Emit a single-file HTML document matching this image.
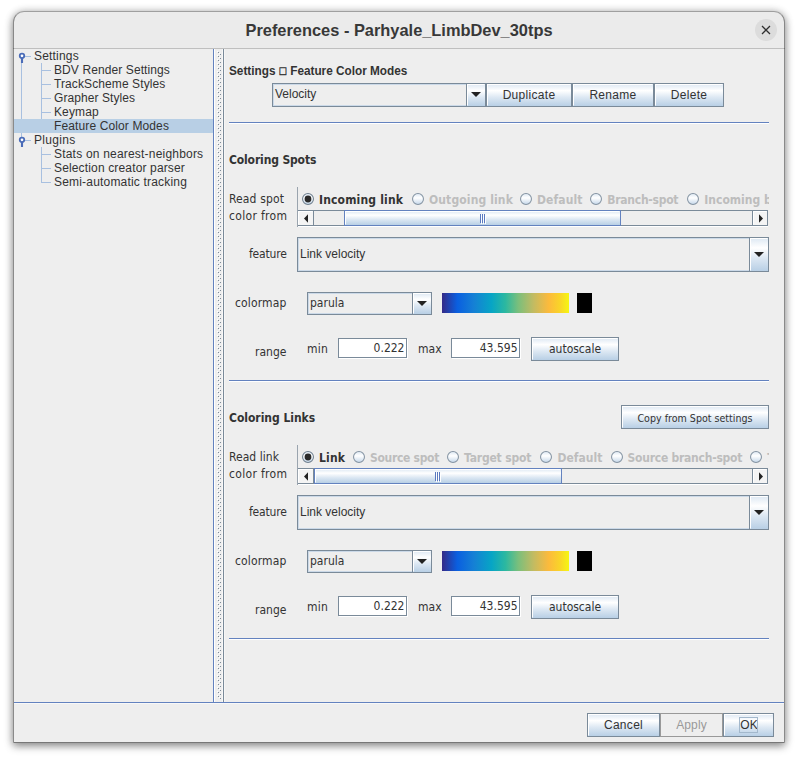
<!DOCTYPE html>
<html><head><meta charset="utf-8"><title>Preferences</title>
<style>
html,body{margin:0;padding:0;background:#fff;}
body{width:798px;height:759px;position:relative;overflow:hidden;font-family:"Liberation Sans",sans-serif;font-size:12px;color:#333;}
#win{position:absolute;left:13px;top:11px;width:772px;height:732px;background:#eee;border-radius:11px 11px 0 0;
 box-shadow:0 3px 8px rgba(0,0,0,.42), 0 0 9px rgba(0,0,0,.16);}
#win:after{content:"";position:absolute;left:0;top:0;right:0;bottom:0;border:1px solid rgba(0,0,0,.42);border-top-color:rgba(0,0,0,.32);border-bottom-color:rgba(0,0,0,.5);border-radius:11px 11px 0 0;pointer-events:none;}
#o{position:absolute;left:-13px;top:-11px;width:798px;height:759px;}
#o *{position:absolute;box-sizing:border-box;}
#title{left:13px;top:11px;width:772px;height:38px;background:#ebebeb;border-radius:11px 11px 0 0;border-bottom:1px solid #bfbfbf;}
#title .t{left:0;width:772px;top:10px;text-align:center;font:bold 16.4px "Liberation Sans",sans-serif;color:#383838;white-space:nowrap;}
#close{left:742px;top:8px;width:22px;height:22px;border-radius:11px;background:#dcdcdc;}
.tree{font:12px "Liberation Sans",sans-serif;color:#333;white-space:nowrap;letter-spacing:.19px;line-height:14px;height:14px;}
.sel{background:#b8cfe5;}
.ln{background:#a8c0e0;}
.sep{height:2px;background:linear-gradient(#6382bf 50%,#fff 50%);left:229px;width:540px;}
.dv{font-family:"DejaVu Sans Condensed","DejaVu Sans",sans-serif;font-size:12px;color:#333;white-space:nowrap;line-height:16px;height:16px;}
.ls{font-family:"Liberation Sans",sans-serif;font-size:12px;color:#333;white-space:nowrap;line-height:16px;height:16px;}
.b{font-weight:bold;}
.lb{letter-spacing:.25px;}
.rl{letter-spacing:.15px;}
.ls.bt{letter-spacing:.3px;}
.sbb{border:1px solid #7a8a99;background:#f4f4f4;}
.sbb:after{content:"";position:absolute;left:0;top:0;right:0;bottom:0;border:1px solid #fff;border-right-color:transparent;border-bottom-color:transparent;}
.dis{color:#bdbdbd;}
.btn{border:1px solid #7a8a99;background:linear-gradient(#dde8f3 0%,#ffffff 30%,#dde8f3 60%,#b8cfe5 100%);text-align:center;color:#333;white-space:nowrap;}
.btn:after{content:"";position:absolute;left:0;top:0;right:0;bottom:0;border:1px solid #fff;border-right-color:transparent;border-bottom-color:transparent;}
.combo{border:1px solid #7a8a99;background:#eee;box-shadow:inset 0 0 0 1px #cbd9e8;}
.fld{border:1px solid #7a8a99;background:#fff;text-align:right;box-shadow:1px 1px 0 #fff;}
.radio{width:12px;height:12px;border-radius:6px;border:1px solid #7a8a99;background:linear-gradient(#dde8f3,#fff 50%,#c9dbec);}
.radio.on:after{content:"";position:absolute;left:2px;top:2px;width:6px;height:6px;border-radius:3px;background:#222;}
</style></head><body>
<div id="win"><div id="o">
<div id="title"><div class="t">Preferences - Parhyale_LimbDev_30tps</div><div id="close"><svg style="left:0;top:0" width="22" height="22" viewBox="0 0 22 22"><path d="M7 7 L15 15 M15 7 L7 15" stroke="#2e2e2e" stroke-width="1.25" fill="none"/></svg></div></div>
<svg style="left:0;top:0" width="0" height="0"><defs><linearGradient id="rg" x1="0" y1="0" x2="0" y2="1"><stop offset="0" stop-color="#dde8f3"/><stop offset=".4" stop-color="#fff"/><stop offset="1" stop-color="#c4d7ea"/></linearGradient></defs></svg>
<div class="ln" style="left:21px;top:62px;width:1px;height:75px;"></div>
<div class="ln" style="left:41px;top:63px;width:1px;height:56px;"></div>
<div class="ln" style="left:41px;top:147px;width:1px;height:36px;"></div>
<div class="ln" style="left:41px;top:70px;width:10px;height:1px;"></div>
<div class="ln" style="left:41px;top:84px;width:10px;height:1px;"></div>
<div class="ln" style="left:41px;top:98px;width:10px;height:1px;"></div>
<div class="ln" style="left:41px;top:112px;width:10px;height:1px;"></div>
<div class="ln" style="left:41px;top:154px;width:10px;height:1px;"></div>
<div class="ln" style="left:41px;top:168px;width:10px;height:1px;"></div>
<div class="ln" style="left:41px;top:182px;width:10px;height:1px;"></div>
<div class="sel" style="left:14px;top:119px;width:199px;height:14px;"></div>
<div class="tree" style="left:34px;top:49px;letter-spacing:0.19px;">Settings</div>
<div class="tree" style="left:54px;top:63px;letter-spacing:0.1px;">BDV Render Settings</div>
<div class="tree" style="left:54px;top:77px;letter-spacing:0.1px;">TrackScheme Styles</div>
<div class="tree" style="left:54px;top:91px;letter-spacing:0.08px;">Grapher Styles</div>
<div class="tree" style="left:54px;top:105px;letter-spacing:0.12px;">Keymap</div>
<div class="tree" style="left:54px;top:119px;letter-spacing:0.12px;">Feature Color Modes</div>
<div class="tree" style="left:34px;top:133px;letter-spacing:0.3px;">Plugins</div>
<div class="tree" style="left:54px;top:147px;letter-spacing:0.2px;">Stats on nearest-neighbors</div>
<div class="tree" style="left:54px;top:161px;letter-spacing:0.15px;">Selection creator parser</div>
<div class="tree" style="left:54px;top:175px;letter-spacing:0.19px;">Semi-automatic tracking</div>
<svg style="left:16px;top:50px" width="16" height="14" viewBox="0 0 16 14"><path d="M9 6.5 H15" stroke="#a8c0e0" stroke-width="1"/><path d="M6 8 V13" stroke="#4a6cb8" stroke-width="2.1"/><circle cx="6" cy="5.8" r="2.25" fill="#fff" stroke="#4a6cb8" stroke-width="1.8"/></svg>
<svg style="left:16px;top:134px" width="16" height="14" viewBox="0 0 16 14"><path d="M9 6.5 H15" stroke="#a8c0e0" stroke-width="1"/><path d="M6 8 V13" stroke="#4a6cb8" stroke-width="2.1"/><circle cx="6" cy="5.8" r="2.25" fill="#fff" stroke="#4a6cb8" stroke-width="1.8"/></svg>
<div style="left:213px;top:49px;width:1px;height:653px;background:#6382bf;"></div>
<div style="left:214px;top:49px;width:1px;height:653px;background:#fff;"></div>
<div style="left:222px;top:49px;width:1px;height:653px;background:#f8f8f8;"></div>
<svg style="left:217px;top:51px" width="4" height="648" viewBox="0 0 4 648"><defs><pattern id="bump" width="4" height="4" patternUnits="userSpaceOnUse"><rect x="0" y="0" width="1" height="1" fill="#fff"/><rect x="1" y="1" width="1" height="1" fill="#7d8b99"/><rect x="2" y="2" width="1" height="1" fill="#fff"/><rect x="3" y="3" width="1" height="1" fill="#7d8b99"/></pattern></defs><rect width="4" height="648" fill="url(#bump)"/></svg>
<div style="left:223px;top:49px;width:1px;height:653px;background:#7a8a99;"></div>
<div style="left:224px;top:49px;width:1px;height:653px;background:#f6f6f6;"></div>
<div class="ls b" style="left:229px;top:63px;font-size:12.5px;transform:scaleX(.942);transform-origin:0 0;">Settings <span style="position:relative;display:inline-block;top:-1.2px;transform:scale(1,1.12);font-family:'DejaVu Sans',sans-serif;font-size:9.2px;font-weight:normal;color:#222;-webkit-text-stroke:.35px #333;">□</span> Feature Color Modes</div>
<div class="combo" style="left:272px;top:83px;width:214px;height:24px;"><div class="ls" style="left:2px;top:2px;">Velocity</div><div class="btn" style="left:193px;top:-1px;width:20px;height:24px;"><svg style="left:4px;top:8px" width="10" height="5" viewBox="0 0 10 5"><path d="M0 0 H10 L5 5 Z" fill="#222"/></svg></div></div>
<div class="btn" style="left:486px;top:83px;width:86px;height:24px;"><div class="ls bt" style="left:0;width:84px;top:3px;text-align:center;">Duplicate</div></div>
<div class="btn" style="left:572px;top:83px;width:82px;height:24px;"><div class="ls bt" style="left:0;width:80px;top:3px;text-align:center;">Rename</div></div>
<div class="btn" style="left:654px;top:83px;width:70px;height:24px;"><div class="ls bt" style="left:0;width:68px;top:3px;text-align:center;">Delete</div></div>
<div class="sep" style="top:122px;"></div>
<div class="dv b" style="left:229px;top:152px;letter-spacing:-0.14px;">Coloring Spots</div>
<div class="dv" style="left:229px;top:191px;letter-spacing:0.13px;">Read spot</div>
<div class="dv" style="left:229px;top:208px;letter-spacing:.32px;">color from</div>
<div style="left:297px;top:187px;width:1px;height:40px;background:#9aa4ae;"></div>
<div style="left:298px;top:188px;width:471px;height:22px;overflow:hidden;">
<svg style="left:4px;top:5px" width="12" height="12" viewBox="0 0 12 12"><circle cx="6" cy="6" r="5.45" fill="url(#rg)" stroke="#6f7f8e" stroke-width="1.05"/><circle cx='6' cy='6' r='3.4' fill='#2b2b2b'/></svg><div class="dv b" style="left:21px;top:4px;letter-spacing:0.17px;">Incoming link</div>
<svg style="left:114px;top:5px" width="12" height="12" viewBox="0 0 12 12"><circle cx="6" cy="6" r="5.45" fill="url(#rg)" stroke="#8493a2" stroke-width="1.05"/></svg><div class="dv b dis" style="left:131px;top:4px;letter-spacing:0.13px;">Outgoing link</div>
<svg style="left:222px;top:5px" width="12" height="12" viewBox="0 0 12 12"><circle cx="6" cy="6" r="5.45" fill="url(#rg)" stroke="#8493a2" stroke-width="1.05"/></svg><div class="dv b dis" style="left:239px;top:4px;letter-spacing:0.12px;">Default</div>
<svg style="left:292.29999999999995px;top:5px" width="12" height="12" viewBox="0 0 12 12"><circle cx="6" cy="6" r="5.45" fill="url(#rg)" stroke="#8493a2" stroke-width="1.05"/></svg><div class="dv b dis" style="left:309.29999999999995px;top:4px;letter-spacing:-0.26px;">Branch-spot</div>
<svg style="left:389.29999999999995px;top:5px" width="12" height="12" viewBox="0 0 12 12"><circle cx="6" cy="6" r="5.45" fill="url(#rg)" stroke="#8493a2" stroke-width="1.05"/></svg><div class="dv b dis" style="left:406.29999999999995px;top:4px;letter-spacing:0px;">Incoming branch</div>
</div>
<div style="left:298px;top:210px;width:470px;height:16px;border:1px solid #7a8a99;border-left:none;background:#eee;"></div>
<div style="left:298px;top:226px;width:470px;height:1px;background:#fff;"></div>
<div class="sbb" style="left:298px;top:210px;width:16px;height:16px;border-left:none;"><svg style="left:6px;top:3px" width="4" height="9" viewBox="0 0 4 9"><path d="M4 0.3 V8.7 L0 4.5 Z" fill="#222"/></svg></div>
<div class="sbb" style="left:752px;top:210px;width:16px;height:16px;"><svg style="left:6px;top:3px" width="4" height="9" viewBox="0 0 4 9"><path d="M0 0.3 V8.7 L4 4.5 Z" fill="#222"/></svg></div>
<div class="btn" style="left:344px;top:210px;width:277px;height:16px;border-color:#6382bf;"><svg style="left:135px;top:3px" width="7" height="10" viewBox="0 0 7 10"><path d="M1.5 1V10M3.5 1V10M5.5 1V10" stroke="#fff" stroke-width="1"/><path d="M0.5 0V9M2.5 0V9M4.5 0V9" stroke="#5b7ac0" stroke-width="1"/></svg></div>
<div class="dv" style="left:249px;top:246px;letter-spacing:-.18px;">feature</div>
<div class="combo" style="left:297px;top:237px;width:472px;height:35px;"><div class="ls" style="left:2px;top:8px;">Link velocity</div><div class="btn" style="left:451px;top:-1px;width:20px;height:35px;"><svg style="left:4px;top:14px" width="10" height="5" viewBox="0 0 10 5"><path d="M0 0 H10 L5 5 Z" fill="#222"/></svg></div></div>
<div class="dv" style="left:235px;top:295px;letter-spacing:.15px;">colormap</div>
<div class="combo" style="left:307px;top:292px;width:125px;height:23px;"><div class="dv" style="left:2px;top:2px;">parula</div><div class="btn" style="left:104px;top:-1px;width:20px;height:23px;"><svg style="left:4px;top:8px" width="10" height="5" viewBox="0 0 10 5"><path d="M0 0 H10 L5 5 Z" fill="#222"/></svg></div></div>
<div style="left:442px;top:293px;width:127px;height:20px;background:linear-gradient(90deg,#352a87 0%,#0a5fe0 12%,#1580d5 25%,#07a5c5 39%,#2cb8a0 50%,#7abf7c 60%,#c2bb62 72%,#fcba3c 84%,#f9d528 93%,#f6f612 100%);"></div>
<div style="left:577px;top:293px;width:15px;height:20px;background:#000;"></div>
<div class="dv" style="left:255px;top:344px;letter-spacing:.03px;">range</div>
<div class="dv lb" style="left:307px;top:341px;">min</div>
<div class="fld" style="left:338px;top:338px;width:69px;height:20px;"><div class="dv" style="right:1.5px;top:1px;">0.222</div></div>
<div class="dv" style="left:418px;top:341px;letter-spacing:.05px;">max</div>
<div class="fld" style="left:451px;top:338px;width:69px;height:20px;"><div class="dv" style="right:1.5px;top:1px;">43.595</div></div>
<div class="btn" style="left:531px;top:337px;width:88px;height:24px;"><div class="dv bt" style="left:0;width:86px;top:3px;text-align:center;">autoscale</div></div>
<div class="sep" style="top:380px;"></div>
<div class="dv b" style="left:229px;top:410px;letter-spacing:-0.03px;">Coloring Links</div>
<div class="btn" style="left:621px;top:405px;width:148px;height:24px;"><div class="dv bt" style="left:0;width:146px;top:3px;text-align:center;font-size:10.6px;top:3.6px;">Copy from Spot settings</div></div>
<div class="dv" style="left:229px;top:449px;letter-spacing:0.04px;">Read link</div>
<div class="dv" style="left:229px;top:466px;letter-spacing:.32px;">color from</div>
<div style="left:297px;top:445px;width:1px;height:40px;background:#9aa4ae;"></div>
<div style="left:298px;top:446px;width:471px;height:22px;overflow:hidden;">
<svg style="left:4px;top:5px" width="12" height="12" viewBox="0 0 12 12"><circle cx="6" cy="6" r="5.45" fill="url(#rg)" stroke="#6f7f8e" stroke-width="1.05"/><circle cx='6' cy='6' r='3.4' fill='#2b2b2b'/></svg><div class="dv b" style="left:21px;top:4px;letter-spacing:0.2px;">Link</div>
<svg style="left:55px;top:5px" width="12" height="12" viewBox="0 0 12 12"><circle cx="6" cy="6" r="5.45" fill="url(#rg)" stroke="#8493a2" stroke-width="1.05"/></svg><div class="dv b dis" style="left:72px;top:4px;letter-spacing:-0.31px;">Source spot</div>
<svg style="left:149px;top:5px" width="12" height="12" viewBox="0 0 12 12"><circle cx="6" cy="6" r="5.45" fill="url(#rg)" stroke="#8493a2" stroke-width="1.05"/></svg><div class="dv b dis" style="left:166px;top:4px;letter-spacing:-0.18px;">Target spot</div>
<svg style="left:242.39999999999998px;top:5px" width="12" height="12" viewBox="0 0 12 12"><circle cx="6" cy="6" r="5.45" fill="url(#rg)" stroke="#8493a2" stroke-width="1.05"/></svg><div class="dv b dis" style="left:259.4px;top:4px;letter-spacing:0.05px;">Default</div>
<svg style="left:312.5px;top:5px" width="12" height="12" viewBox="0 0 12 12"><circle cx="6" cy="6" r="5.45" fill="url(#rg)" stroke="#8493a2" stroke-width="1.05"/></svg><div class="dv b dis" style="left:329.5px;top:4px;letter-spacing:-0.24px;">Source branch-spot</div>
<svg style="left:452.29999999999995px;top:5px" width="12" height="12" viewBox="0 0 12 12"><circle cx="6" cy="6" r="5.45" fill="url(#rg)" stroke="#8493a2" stroke-width="1.05"/></svg><div class="dv b dis" style="left:469.29999999999995px;top:4px;letter-spacing:0px;">Target branch-spot</div>
</div>
<div style="left:298px;top:468px;width:470px;height:16px;border:1px solid #7a8a99;border-left:none;background:#eee;"></div>
<div style="left:298px;top:484px;width:470px;height:1px;background:#fff;"></div>
<div class="sbb" style="left:298px;top:468px;width:16px;height:16px;border-left:none;"><svg style="left:6px;top:3px" width="4" height="9" viewBox="0 0 4 9"><path d="M4 0.3 V8.7 L0 4.5 Z" fill="#222"/></svg></div>
<div class="sbb" style="left:752px;top:468px;width:16px;height:16px;"><svg style="left:6px;top:3px" width="4" height="9" viewBox="0 0 4 9"><path d="M0 0.3 V8.7 L4 4.5 Z" fill="#222"/></svg></div>
<div class="btn" style="left:314px;top:468px;width:248px;height:16px;border-color:#6382bf;"><svg style="left:120px;top:3px" width="7" height="10" viewBox="0 0 7 10"><path d="M1.5 1V10M3.5 1V10M5.5 1V10" stroke="#fff" stroke-width="1"/><path d="M0.5 0V9M2.5 0V9M4.5 0V9" stroke="#5b7ac0" stroke-width="1"/></svg></div>
<div class="dv" style="left:249px;top:504px;letter-spacing:-.18px;">feature</div>
<div class="combo" style="left:297px;top:495px;width:472px;height:35px;"><div class="ls" style="left:2px;top:8px;">Link velocity</div><div class="btn" style="left:451px;top:-1px;width:20px;height:35px;"><svg style="left:4px;top:14px" width="10" height="5" viewBox="0 0 10 5"><path d="M0 0 H10 L5 5 Z" fill="#222"/></svg></div></div>
<div class="dv" style="left:235px;top:553px;letter-spacing:.15px;">colormap</div>
<div class="combo" style="left:307px;top:550px;width:125px;height:23px;"><div class="dv" style="left:2px;top:2px;">parula</div><div class="btn" style="left:104px;top:-1px;width:20px;height:23px;"><svg style="left:4px;top:8px" width="10" height="5" viewBox="0 0 10 5"><path d="M0 0 H10 L5 5 Z" fill="#222"/></svg></div></div>
<div style="left:442px;top:551px;width:127px;height:20px;background:linear-gradient(90deg,#352a87 0%,#0a5fe0 12%,#1580d5 25%,#07a5c5 39%,#2cb8a0 50%,#7abf7c 60%,#c2bb62 72%,#fcba3c 84%,#f9d528 93%,#f6f612 100%);"></div>
<div style="left:577px;top:551px;width:15px;height:20px;background:#000;"></div>
<div class="dv" style="left:255px;top:602px;letter-spacing:.03px;">range</div>
<div class="dv lb" style="left:307px;top:599px;">min</div>
<div class="fld" style="left:338px;top:596px;width:69px;height:20px;"><div class="dv" style="right:1.5px;top:1px;">0.222</div></div>
<div class="dv" style="left:418px;top:599px;letter-spacing:.05px;">max</div>
<div class="fld" style="left:451px;top:596px;width:69px;height:20px;"><div class="dv" style="right:1.5px;top:1px;">43.595</div></div>
<div class="btn" style="left:531px;top:595px;width:88px;height:24px;"><div class="dv bt" style="left:0;width:86px;top:3px;text-align:center;">autoscale</div></div>
<div class="sep" style="top:638px;"></div>
<div style="left:14px;top:702px;width:770px;height:2px;background:linear-gradient(#6382bf 50%,#f8f8f8 50%);"></div>
<div class="btn" style="left:587px;top:713px;width:73px;height:24px;"><div class="ls bt" style="left:0;width:71px;top:3px;text-align:center;">Cancel</div></div>
<div style="left:660px;top:713px;width:63px;height:24px;border:1px solid #999;background:#eee;"><div class="ls" style="left:0;width:61px;top:3px;text-align:center;color:#999;letter-spacing:.1px;">Apply</div></div>
<div class="btn" style="left:723px;top:713px;width:51px;height:24px;"><div class="ls bt" style="left:0;width:49px;top:3px;text-align:center;letter-spacing:0;left:.5px;">OK</div></div>
<div style="left:739px;top:717px;width:19px;height:16px;border:1px solid #a3b8cc;"></div>
</div></div>
</body></html>
